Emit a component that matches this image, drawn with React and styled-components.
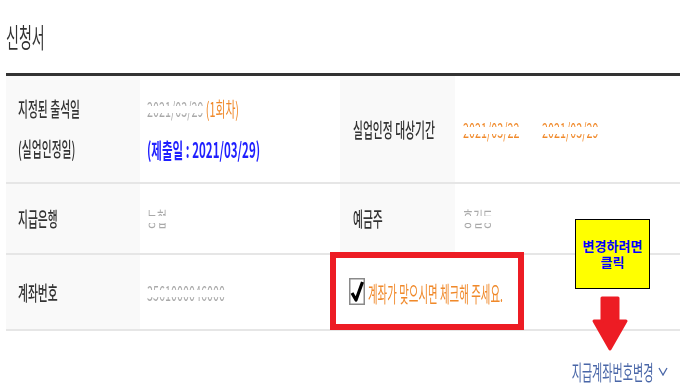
import React from "react";
import styled, { createGlobalStyle } from "styled-components";

const GlobalStyle = createGlobalStyle`
    html, body {
        margin: 0;
        padding: 0;
        background: #fff;
    }
    body {
        font-family: "Noto Sans CJK KR", "Noto Sans", sans-serif;
        color: #333;
    }
`;

const ORANGE = "#f0892a";
const RED = "#ed1c24";

const App = () => {
    return (
        <Page>
            <GlobalStyle />
            <Title>
                <Squeeze $sx={0.52}>신청서</Squeeze>
            </Title>

            <Table>
                <Row $height={108}>
                    <Label>
                        <Line><Squeeze>지정된 출석일</Squeeze></Line>
                        <Line><Squeeze>(실업인정일)</Squeeze></Line>
                    </Label>
                    <Value>
                        <Line>
                            <Squeeze>
                                <Masked $color="#a9a9a9">2021/03/29</Masked>{" "}
                                <Accent>(1회차)</Accent>
                            </Squeeze>
                        </Line>
                        <Line>
                            <Squeeze $sx={0.55}>
                                <Submitted>(제출일 : 2021/03/29)</Submitted>
                            </Squeeze>
                        </Line>
                    </Value>
                    <Label $pad={13}>
                        <Squeeze>실업인정 대상기간</Squeeze>
                    </Label>
                    <Value $pad={8}>
                        <Squeeze>
                            <Masked $color={ORANGE}>2021/03/22</Masked>
                            <Spacer />
                            <Masked $color={ORANGE}>2021/03/29</Masked>
                        </Squeeze>
                    </Value>
                </Row>

                <Row $height={71}>
                    <Label>
                        <Squeeze>지급은행</Squeeze>
                    </Label>
                    <Value>
                        <Squeeze>
                            <Masked $color="#a9a9a9">농협</Masked>
                        </Squeeze>
                    </Value>
                    <Label $pad={13}>
                        <Squeeze>예금주</Squeeze>
                    </Label>
                    <Value $pad={8}>
                        <Squeeze>
                            <Masked $color="#a9a9a9">홍길동</Masked>
                        </Squeeze>
                    </Value>
                </Row>

                <Row $height={76}>
                    <Label>
                        <Squeeze>계좌번호</Squeeze>
                    </Label>
                    <Value $span={3}>
                        <Squeeze>
                            <Masked $color="#a9a9a9">3561000046000</Masked>
                        </Squeeze>
                    </Value>
                </Row>
            </Table>

            <Footer>
                <ChangeLink>
                    <Squeeze $origin="right" $sx={0.53}>지급계좌번호변경</Squeeze>
                    <svg width="10" height="9" viewBox="0 0 10 9">
                        <path d="M1 1 L5 8 L9 1" fill="none" stroke="#4a67a8" strokeWidth="1.3" />
                    </svg>
                </ChangeLink>
            </Footer>

            <ConfirmBox>
                <CheckMark width="16" height="27" viewBox="0 0 16 27">
                    <rect x="0.75" y="0.75" width="14.5" height="25.5" fill="#fff" stroke="#8a8a8a" strokeWidth="1.5" />
                    <path d="M3 15 L7 22 L13.5 4" fill="none" stroke="#000" strokeWidth="3.2" strokeLinejoin="round" />
                </CheckMark>
                <Squeeze $sx={0.475}>
                    <Notice>계좌가 맞으시면 체크해 주세요.</Notice>
                </Squeeze>
            </ConfirmBox>

            <Note>
                변경하려면
                <br />
                클릭
            </Note>

            <Arrow width="38" height="56" viewBox="0 0 38 56">
                <path
                    d="M11 2 H27 V25 H35 L19 53 L3 25 H11 Z"
                    fill={RED}
                    stroke={RED}
                    strokeWidth="3"
                    strokeLinejoin="round"
                />
            </Arrow>
        </Page>
    );
};

const Page = styled.div`
    position: relative;
    width: 680px;
    height: 383px;
    overflow: hidden;
    padding-left: 6px;
    box-sizing: border-box;
`;

const Title = styled.div`
    display: flex;
    align-items: center;
    height: 73px;
    font-size: 27px;
    font-weight: 400;
    color: #333;
`;

const Squeeze = styled.span`
    display: inline-block;
    white-space: nowrap;
    transform: scaleX(${(p) => p.$sx ?? 0.54});
    transform-origin: ${(p) => p.$origin ?? "left"} center;
`;

const Table = styled.div`
    width: 674px;
    border-top: 3px solid #333;
`;

const Row = styled.div`
    display: grid;
    grid-template-columns: 134px 200px 115px 1fr;
    height: ${(p) => p.$height}px;
    border-bottom: 2px solid #e6e6e6;
    box-sizing: border-box;
    font-size: 20px;
`;

const Label = styled.div`
    display: flex;
    flex-direction: column;
    justify-content: center;
    padding-left: ${(p) => p.$pad ?? 12}px;
    background: #f9f9f9;
    color: #333;
    font-weight: 500;
    overflow: hidden;
`;

const Value = styled.div`
    display: flex;
    flex-direction: column;
    justify-content: center;
    padding-left: ${(p) => p.$pad ?? 7}px;
    grid-column: span ${(p) => p.$span ?? 1};
    overflow: hidden;
`;

const Line = styled.div`
    height: 40px;
    line-height: 40px;
`;

const Masked = styled.span`
    color: transparent;
    background: linear-gradient(
        to bottom,
        ${(p) => p.$color} 0%,
        ${(p) => p.$color} 42%,
        transparent 42%,
        transparent 66%,
        ${(p) => p.$color} 66%,
        ${(p) => p.$color} 100%
    );
    -webkit-background-clip: text;
    background-clip: text;
`;

const Accent = styled.span`
    color: ${ORANGE};
`;

const Submitted = styled.span`
    font-size: 21px;
    color: #1f1fff;
    font-weight: 700;
`;

const Spacer = styled.span`
    display: inline-block;
    width: 42px;
`;

const Footer = styled.div`
    display: flex;
    justify-content: flex-end;
    align-items: center;
    height: 80px;
    padding-right: 12px;
`;

const ChangeLink = styled.a`
    display: flex;
    align-items: center;
    gap: 4px;
    font-size: 21px;
    color: #4a67a8;
    cursor: pointer;
`;

const ConfirmBox = styled.div`
    position: absolute;
    left: 330px;
    top: 252px;
    width: 194px;
    height: 78px;
    box-sizing: border-box;
    border: 6px solid ${RED};
    background: #fff;
    display: flex;
    align-items: center;
    gap: 3px;
    padding-left: 13px;
    padding-top: 1px;
    overflow: hidden;
`;

const CheckMark = styled.svg`
    flex-shrink: 0;
`;

const Notice = styled.span`
    font-size: 22px;
    color: ${ORANGE};
`;

const Note = styled.div`
    position: absolute;
    left: 575px;
    top: 219px;
    width: 75px;
    height: 70px;
    box-sizing: border-box;
    border: 1px solid #000;
    background: #ffff00;
    display: flex;
    align-items: center;
    justify-content: center;
    text-align: center;
    font-size: 13px;
    line-height: 16px;
    font-weight: 700;
    color: #0000ff;
`;

const Arrow = styled.svg`
    position: absolute;
    left: 591px;
    top: 296px;
`;

export default App;
